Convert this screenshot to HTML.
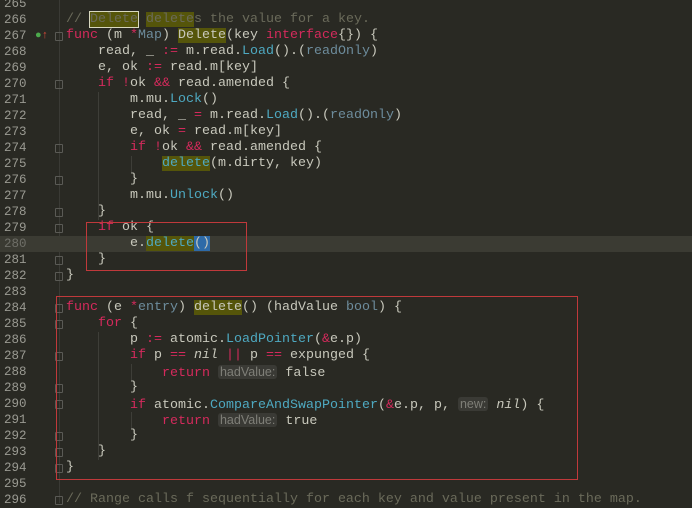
<!DOCTYPE html>
<html><head><style>
body{margin:0;width:692px;height:503px;background:#292923;overflow:hidden;position:relative;font-family:"Liberation Mono",monospace;font-size:13.33px;color:#c8c8bc}
.l{position:absolute;left:0;height:16px;line-height:16px;width:692px;white-space:pre}
.n{position:absolute;left:4px;color:#9a9a92;font-size:12.5px}
.c{position:absolute;left:66px}
.k{color:#d42a5c}.f{color:#4ea9c1}.t{color:#6d8c9c}.m{color:#6a6a5a}
.h{background:#55550a}.hb{outline:1px solid #d8d8c0;background:#55550a}
.hint{background:#3a3a35;color:#7f7f78;font-family:"Liberation Sans",sans-serif;font-size:12.5px;border-radius:3px;padding:0 2px}
.i{font-style:italic}
.cur{background:#3b3b33}
.fold{position:absolute;left:55px;width:8px;height:9px;border:1px solid #5a5a55;border-radius:1px;box-sizing:border-box}
.box{position:absolute;border:1px solid #c0393b}
.g{position:absolute;border-left:1px solid #3e3e38}
</style></head><body>
<div style="position:absolute;left:59px;top:0;height:503px;border-left:1px solid #3a3a35"></div>
<div class="l cur" style="top:236px"></div>
<div class="g" style="left:98px;top:92px;height:128px"></div>
<div class="g" style="left:131px;top:156px;height:16px"></div>
<div class="g" style="left:98px;top:332px;height:128px"></div>
<div class="g" style="left:131px;top:364px;height:16px"></div>
<div class="g" style="left:131px;top:412px;height:16px"></div>

<div class="l" style="top:-4px"><span class="n">265</span></div>
<div class="l" style="top:12px"><span class="n">266</span><span class="c m">// <span class="hb">Delete</span> <span class="h">delete</span>s the value for a key.</span></div>
<div class="l" style="top:28px"><span class="n">267</span><span style="position:absolute;left:35px;color:#4caa4c;font-size:11px">●<span style="color:#d24a3a">↑</span></span><span class="c"><span class="k">func</span> (m <span class="k">*</span><span class="t">Map</span>) <span class="h">Delete</span>(key <span class="k">interface</span>{}) {</span></div>
<div class="l" style="top:44px"><span class="n">268</span><span class="c">    read, _ <span class="k">:=</span> m.read.<span class="f">Load</span>().(<span class="t">readOnly</span>)</span></div>
<div class="l" style="top:60px"><span class="n">269</span><span class="c">    e, ok <span class="k">:=</span> read.m[key]</span></div>
<div class="l" style="top:76px"><span class="n">270</span><span class="c">    <span class="k">if</span> <span class="k">!</span>ok <span class="k">&amp;&amp;</span> read.amended {</span></div>
<div class="l" style="top:92px"><span class="n">271</span><span class="c">        m.mu.<span class="f">Lock</span>()</span></div>
<div class="l" style="top:108px"><span class="n">272</span><span class="c">        read, _ <span class="k">=</span> m.read.<span class="f">Load</span>().(<span class="t">readOnly</span>)</span></div>
<div class="l" style="top:124px"><span class="n">273</span><span class="c">        e, ok <span class="k">=</span> read.m[key]</span></div>
<div class="l" style="top:140px"><span class="n">274</span><span class="c">        <span class="k">if</span> <span class="k">!</span>ok <span class="k">&amp;&amp;</span> read.amended {</span></div>
<div class="l" style="top:156px"><span class="n">275</span><span class="c">            <span class="h f">delete</span>(m.dirty, key)</span></div>
<div class="l" style="top:172px"><span class="n">276</span><span class="c">        }</span></div>
<div class="l" style="top:188px"><span class="n">277</span><span class="c">        m.mu.<span class="f">Unlock</span>()</span></div>
<div class="l" style="top:204px"><span class="n">278</span><span class="c">    }</span></div>
<div class="l" style="top:220px"><span class="n">279</span><span class="c">    <span class="k">if</span> ok {</span></div>
<div class="l" style="top:236px"><span class="n" style="color:#6f6f68">280</span><span class="c">        e.<span class="h f">delete</span><span style="background:#2d6aa8">()</span></span></div>
<div class="l" style="top:252px"><span class="n">281</span><span class="c">    }</span></div>
<div class="l" style="top:268px"><span class="n">282</span><span class="c">}</span></div>
<div class="l" style="top:284px"><span class="n">283</span></div>
<div class="l" style="top:300px"><span class="n">284</span><span class="c"><span class="k">func</span> (e <span class="k">*</span><span class="t">entry</span>) <span class="h">delete</span>() (hadValue <span class="t">bool</span>) {</span></div>
<div class="l" style="top:316px"><span class="n">285</span><span class="c">    <span class="k">for</span> {</span></div>
<div class="l" style="top:332px"><span class="n">286</span><span class="c">        p <span class="k">:=</span> atomic.<span class="f">LoadPointer</span>(<span class="k">&amp;</span>e.p)</span></div>
<div class="l" style="top:348px"><span class="n">287</span><span class="c">        <span class="k">if</span> p <span class="k">==</span> <span class="i">nil</span> <span class="k">||</span> p <span class="k">==</span> expunged {</span></div>
<div class="l" style="top:364px"><span class="n">288</span><span class="c">            <span class="k">return</span> <span class="hint">hadValue:</span> false</span></div>
<div class="l" style="top:380px"><span class="n">289</span><span class="c">        }</span></div>
<div class="l" style="top:396px"><span class="n">290</span><span class="c">        <span class="k">if</span> atomic.<span class="f">CompareAndSwapPointer</span>(<span class="k">&amp;</span>e.p, p, <span class="hint">new:</span> <span class="i">nil</span>) {</span></div>
<div class="l" style="top:412px"><span class="n">291</span><span class="c">            <span class="k">return</span> <span class="hint">hadValue:</span> true</span></div>
<div class="l" style="top:428px"><span class="n">292</span><span class="c">        }</span></div>
<div class="l" style="top:444px"><span class="n">293</span><span class="c">    }</span></div>
<div class="l" style="top:460px"><span class="n">294</span><span class="c">}</span></div>
<div class="l" style="top:476px"><span class="n">295</span></div>
<div class="l" style="top:492px"><span class="n">296</span><span class="c m">// Range calls f sequentially for each key and value present in the map.</span></div>

<div class="fold" style="top:32px"></div><div class="fold" style="top:80px"></div><div class="fold" style="top:144px"></div>
<div class="fold" style="top:176px"></div><div class="fold" style="top:208px"></div><div class="fold" style="top:224px"></div>
<div class="fold" style="top:256px"></div><div class="fold" style="top:272px"></div><div class="fold" style="top:304px"></div>
<div class="fold" style="top:320px"></div><div class="fold" style="top:352px"></div><div class="fold" style="top:384px"></div>
<div class="fold" style="top:400px"></div><div class="fold" style="top:432px"></div><div class="fold" style="top:448px"></div>
<div class="fold" style="top:464px"></div><div class="fold" style="top:496px"></div>

<div class="box" style="left:86px;top:222px;width:159px;height:47px"></div>
<div class="box" style="left:56px;top:296px;width:520px;height:182px"></div>
</body></html>
